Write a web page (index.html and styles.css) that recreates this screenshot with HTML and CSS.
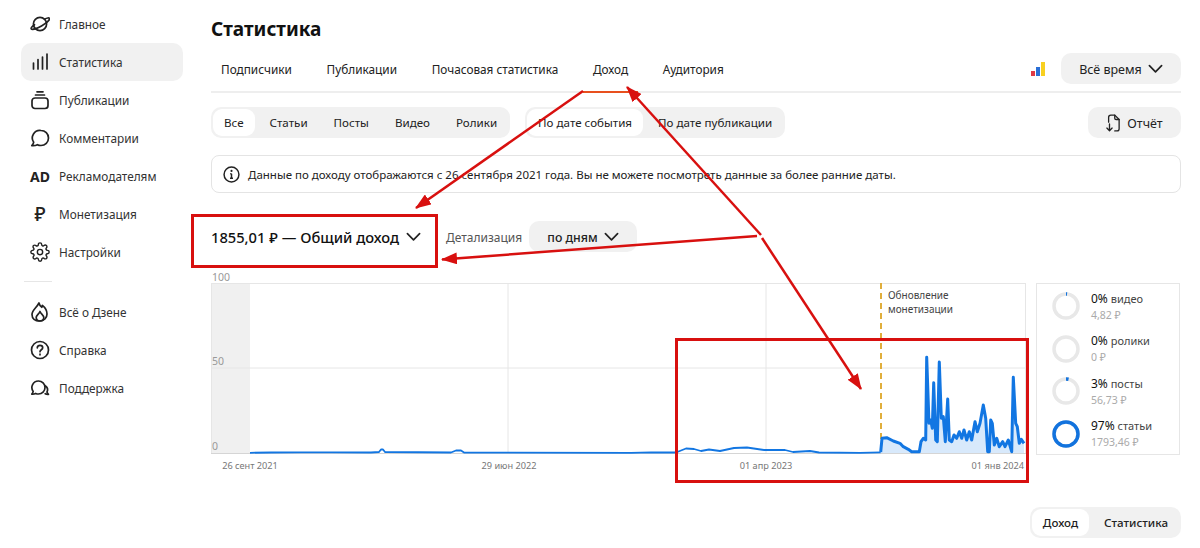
FILE: index.html
```html
<!DOCTYPE html>
<html lang="en">
<head>
  <meta charset="UTF-8">
  <title>Статистика</title>
  <link rel="stylesheet" href="styles.css">
</head>
<body>
  <nav class="sidebar">
    <a class="nav-item">
      <svg class="nav-icon" viewBox="0 0 20 20"><circle cx="10" cy="10" r="6.6"/><path d="M14.5 5.2c2.6-1.4 4.6-1.6 5-.8.6 1.300-3 4.700-8 7.500s-9.600 4-10.300 2.800c-.4-.8 1-2.300 3.300-4"/></svg>
      <span>Главное</span>
    </a>
    <a class="nav-item active">
      <svg class="nav-icon" viewBox="0 0 20 20"><path d="M3.500 17v-6M8 17V7.500M12.500 17V5M17 17V2"/></svg>
      <span>Статистика</span>
    </a>
    <a class="nav-item">
      <svg class="nav-icon" viewBox="0 0 20 20"><rect x="2" y="8" width="16" height="10.500" rx="3"/><path d="M5.500 5h9M7 1.800h6"/></svg>
      <span>Публикации</span>
    </a>
    <a class="nav-item">
      <svg class="nav-icon" viewBox="0 0 20 20"><path d="M11 2.500a7.500 7.500 0 0 1 0 15c-1.300 0-2.500-.2-3.600-.8-1.700.9-3.700 1.100-5.600.9 1-1 1.700-2.100 1.900-3.400A7.500 7.500 0 0 1 11 2.500z"/></svg>
      <span>Комментарии</span>
    </a>
    <a class="nav-item">
      <span class="nav-glyph ad">AD</span>
      <span>Рекламодателям</span>
    </a>
    <a class="nav-item">
      <span class="nav-glyph">₽</span>
      <span>Монетизация</span>
    </a>
    <a class="nav-item">
      <svg class="nav-icon" viewBox="0 0 24 24"><circle cx="12" cy="12" r="3.200"/><path d="M19.400 15a1.650 1.650 0 0 0 .33 1.820l.06.06a2 2 0 0 1 0 2.830 2 2 0 0 1-2.830 0l-.06-.06a1.650 1.650 0 0 0-1.820-.33 1.650 1.650 0 0 0-1 1.510V21a2 2 0 0 1-2 2 2 2 0 0 1-2-2v-.09A1.650 1.650 0 0 0 9 19.400a1.650 1.650 0 0 0-1.820.33l-.06.06a2 2 0 0 1-2.830 0 2 2 0 0 1 0-2.830l.06-.06a1.650 1.650 0 0 0 .33-1.820 1.650 1.650 0 0 0-1.510-1H3a2 2 0 0 1-2-2 2 2 0 0 1 2-2h.09A1.650 1.650 0 0 0 4.600 9a1.650 1.650 0 0 0-.33-1.820l-.06-.06a2 2 0 0 1 0-2.830 2 2 0 0 1 2.830 0l.06.06a1.650 1.650 0 0 0 1.820.33H9a1.650 1.650 0 0 0 1-1.510V3a2 2 0 0 1 2-2 2 2 0 0 1 2 2v.09a1.650 1.650 0 0 0 1 1.510 1.650 1.650 0 0 0 1.820-.33l.06-.06a2 2 0 0 1 2.830 0 2 2 0 0 1 0 2.830l-.06.06a1.650 1.650 0 0 0-.33 1.820V9a1.650 1.650 0 0 0 1.510 1H21a2 2 0 0 1 2 2 2 2 0 0 1-2 2h-.09a1.650 1.650 0 0 0-1.510 1z"/></svg>
      <span>Настройки</span>
    </a>
    <div class="nav-divider"></div>
    <a class="nav-item">
      <svg class="nav-icon" viewBox="0 0 20 20"><path d="M9 1c.6 2.400 1.500 3.600 2.800 4.300.4-.7.600-1.300.6-2 2.600 2 4.600 5 4.600 8.700 0 4-3 7-7.500 7S2 16.500 2 12.500C2 8 6.500 6 9 1z"/><path d="M10 19c-2.300 0-3.800-1.500-3.800-3.400 0-2.300 2.700-3.400 3.800-6.100 1.100 2.700 3.800 3.800 3.800 6.100 0 1.900-1.500 3.400-3.800 3.400z"/></svg>
      <span>Всё о Дзене</span>
    </a>
    <a class="nav-item">
      <svg class="nav-icon" viewBox="0 0 20 20"><circle cx="10" cy="10" r="8.500"/><path d="M7.300 7.800c0-1.500 1.200-2.500 2.700-2.500s2.700 1 2.700 2.400c0 2-2.700 2-2.700 4M10 14.200v.6"/></svg>
      <span>Справка</span>
    </a>
    <a class="nav-item">
      <svg class="nav-icon" viewBox="0 0 20 20"><path d="M8.500 3a6.500 6.500 0 0 1 0 13c-1 0-2-.2-2.800-.6-1.200.6-2.600.8-3.900.7.700-.8 1.200-1.700 1.400-2.700A6.500 6.500 0 0 1 8.500 3z"/><path d="M15.500 8c2 1.500 2.500 4 1.500 6 .2.900.7 1.600 1.500 2.300-1.300.1-2.400-.1-3.300-.6"/></svg>
      <span>Поддержка</span>
    </a>
  </nav>

  <main class="content">
    <h1 class="page-title">Статистика</h1>

    <div class="tabs-row">
      <div class="tabs">
        <a class="tab">Подписчики</a>
        <a class="tab">Публикации</a>
        <a class="tab">Почасовая статистика</a>
        <a class="tab tab-active">Доход</a>
        <a class="tab">Аудитория</a>
      </div>
      <div class="tabs-right">
        <div class="mini-bars"><i class="bar-red"></i><i class="bar-blue"></i><i class="bar-yellow"></i></div>
        <button class="pill-button range-button">Всё время
          <svg class="chevron" viewBox="0 0 16 10"><path d="M1.500 1.500 8 8l6.500-6.500"/></svg>
        </button>
      </div>
    </div>

    <div class="filters-row">
      <div class="segment">
        <span class="segment-item on">Все</span>
        <span class="segment-item">Статьи</span>
        <span class="segment-item">Посты</span>
        <span class="segment-item">Видео</span>
        <span class="segment-item">Ролики</span>
      </div>
      <div class="segment">
        <span class="segment-item on">По дате события</span>
        <span class="segment-item">По дате публикации</span>
      </div>
      <button class="pill-button report-button">
        <svg class="report-icon" viewBox="0 0 16 20"><path d="M3 9V3.500C3 2 4 1 5.500 1H10l5 5v10.500c0 1.500-1 2.500-2.500 2.500H10"/><path d="M10 1v3.500C10 5.500 10.500 6 11.500 6H15"/><path d="M4 11v7.500M1 15.800l3 3 3-3"/></svg>
        Отчёт
      </button>
    </div>

    <div class="notice">
      <svg class="notice-icon" viewBox="0 0 16 16"><circle cx="8" cy="8" r="7"/><path d="M8 7.200v4.300M6.600 11.500h2.800M6.800 7.200H8"/><circle class="dot" cx="8" cy="4.600" r="1"/></svg>
      Данные по доходу отображаются с 26 сентября 2021 года. Вы не можете посмотреть данные за более ранние даты.
    </div>

    <div class="total-row">
      <div class="total">1855,01 ₽ — Общий доход
        <svg class="chevron" viewBox="0 0 16 10"><path d="M1.500 1.500 8 8l6.500-6.500"/></svg>
      </div>
      <span class="detail-label">Детализация</span>
      <button class="pill-button detail-button">по дням
        <svg class="chevron" viewBox="0 0 16 10"><path d="M1.500 1.500 8 8l6.500-6.500"/></svg>
      </button>
    </div>

    <div class="chart-row">
      <div class="chart">
        <svg class="chart-svg" width="815" height="172" viewBox="0 0 815 172">
          <rect class="band" x="0" y="0" width="39" height="170"/>
          <path class="grid" d="M297 0v170M555 0v170M0 85h815M.5 0v170M.5 .5h814M814.500 0v170"/>
          <path class="base" d="M0 170.500h815"/>
          <path class="dash" d="M670 0v170"/>
          <polygon class="area" points="649,170 669.700,168.700 671,155.300 675.700,154.700 682.300,158 689,160.300 692.300,163.700 697.300,166.300 700.700,168.700 708.300,168.700 710,158.700 712.300,155.300 714.700,157 715.700,74.300 718,140.300 719.700,137 721.300,145.300 722.700,99.700 724.700,157 726.300,158.700 728.300,79 730.300,135.300 732.300,133.700 734.300,158.700 736.700,116 738.300,157 740.700,158.700 743,152 745.700,155.300 748.300,148.700 750.700,155.300 753,147 755.700,157 758.300,148.700 760.700,157 764,138.700 766.300,148.700 769,140.300 772.300,122 774.700,135.300 776.700,168.700 778.300,168.700 779.700,137 781.300,140.300 783.300,162 785.700,155.300 788.300,163.700 791.700,158.700 794,163.700 797.300,157 800.700,168.700 802.300,94.300 804.700,140.300 806.300,143.700 808.300,160.300 810.300,156.300 813,160.300 813,170"/>
          <polyline class="line line-flat" points="39,169.800 60,169.500 90,169.300 120,169.300 160,169.500 168,169 170,166.500 172,166.500 174,169 240,169.500 245,167.500 250,167.500 253,169.500 420,169.800 440,169.300 465,169.500 475,165.500 483,166 490,168 498,166.500 509,168 523,165 536,164.500 553,167 574,167 582,169 599,168 608,169.500 649,169.800 669.700,169.300"/>
          <polyline class="line" points="669.700,169 671,155.300 675.700,154.700 682.300,158 689,160.300 692.300,163.700 697.300,166.300 700.700,168.700 708.300,168.700 710,158.700 712.300,155.300 714.700,157 715.700,74.300 718,140.300 719.700,137 721.300,145.300 722.700,99.700 724.700,157 726.300,158.700 728.300,79 730.300,135.300 732.300,133.700 734.300,158.700 736.700,116 738.300,157 740.700,158.700 743,152 745.700,155.300 748.300,148.700 750.700,155.300 753,147 755.700,157 758.300,148.700 760.700,157 764,138.700 766.300,148.700 769,140.300 772.300,122 774.700,135.300 776.700,168.700 778.300,168.700 779.700,137 781.300,140.300 783.300,162 785.700,155.300 788.300,163.700 791.700,158.700 794,163.700 797.300,157 800.700,168.700 802.300,94.300 804.700,140.300 806.300,143.700 808.300,160.300 810.300,156.300 813,160.300"/>
          <text class="tick" x="1" y="-2">100</text>
          <text class="tick" x="1" y="82">50</text>
          <text class="tick" x="1" y="167">0</text>
          <text class="date" x="39" y="186" text-anchor="middle">26 сент 2021</text>
          <text class="date" x="298" y="186" text-anchor="middle">29 июн 2022</text>
          <text class="date" x="555" y="186" text-anchor="middle">01 апр 2023</text>
          <text class="date" x="813" y="186" text-anchor="end">01 янв 2024</text>
          <text class="note" x="677" y="16">Обновление</text>
          <text class="note" x="677" y="30">монетизации</text>
        </svg>
      </div>

      <div class="legend">
        <div class="legend-item">
          <svg class="ring" viewBox="0 0 28 28"><circle class="ring-bg" cx="14" cy="14" r="12"/><circle class="ring-val" cx="14" cy="14" r="12" pathLength="100" stroke-dasharray="1.500 98.500"/></svg>
          <div><div class="legend-name"><b>0%</b> видео</div><div class="legend-sum">4,82 ₽</div></div>
        </div>
        <div class="legend-item">
          <svg class="ring" viewBox="0 0 28 28"><circle class="ring-bg" cx="14" cy="14" r="12"/></svg>
          <div><div class="legend-name"><b>0%</b> ролики</div><div class="legend-sum">0 ₽</div></div>
        </div>
        <div class="legend-item">
          <svg class="ring" viewBox="0 0 28 28"><circle class="ring-bg" cx="14" cy="14" r="12"/><circle class="ring-val" cx="14" cy="14" r="12" pathLength="100" stroke-dasharray="3.500 96.500"/></svg>
          <div><div class="legend-name"><b>3%</b> посты</div><div class="legend-sum">56,73 ₽</div></div>
        </div>
        <div class="legend-item">
          <svg class="ring" viewBox="0 0 28 28"><circle class="ring-bg" cx="14" cy="14" r="12"/><circle class="ring-val" cx="14" cy="14" r="12" pathLength="100" stroke-dasharray="100 0"/></svg>
          <div><div class="legend-name"><b>97%</b> статьи</div><div class="legend-sum">1793,46 ₽</div></div>
        </div>
      </div>
    </div>

    <div class="segment bottom-toggle">
      <span class="segment-item on">Доход</span>
      <span class="segment-item">Статистика</span>
    </div>
  </main>

  <!-- red marks drawn over the screenshot -->
  <svg class="marks" width="1200" height="548" viewBox="0 0 1200 548">
    <defs>
      <marker id="head" markerUnits="userSpaceOnUse" markerWidth="16" markerHeight="12" refX="15" refY="6" orient="auto">
        <path d="M0 0 16 6 0 12z" fill="#d8100f" stroke="none"/>
      </marker>
    </defs>
    <rect x="192.500" y="215.500" width="244" height="51"/>
    <rect x="676.500" y="339.500" width="351" height="142"/>
    <path d="M583 91 416 208" marker-end="url(#head)"/>
    <path d="M761 235 627 87" marker-end="url(#head)"/>
    <path d="M757 236 442 259.500" marker-end="url(#head)"/>
    <path d="M762 238 861 389" marker-end="url(#head)"/>
  </svg>
</body>
</html>
```

FILE: styles.css
```css
* {
  box-sizing: border-box;
}
body {
  margin: 0;
  height: 548px;
  overflow: hidden;
  display: flex;
  background-color: #fff;
  color: #222;
  font-family: "Noto Sans", Arial, sans-serif;
  font-size: 11.800px;
}
button {
  font-family: inherit;
  color: inherit;
  border: none;
}

/* sidebar */
.sidebar {
  width: 211px;
  flex-shrink: 0;
  padding: 5px 28px 0 21px;
}
.nav-item {
  display: flex;
  align-items: center;
  gap: 9px;
  height: 38px;
  padding-left: 9px;
  border-radius: 10px;
  color: #333;
}
.nav-item.active {
  background-color: #f1f1f1;
}
.nav-icon {
  width: 20px;
  height: 20px;
  flex-shrink: 0;
  fill: none;
  stroke: #222;
  stroke-width: 1.7;
  stroke-linecap: round;
  stroke-linejoin: round;
}
.nav-glyph {
  width: 20px;
  flex-shrink: 0;
  text-align: center;
  font-size: 19px;
  font-weight: 500;
  color: #222;
}
.nav-glyph.ad {
  font-size: 14px;
  font-weight: 700;
}
.nav-divider {
  width: 28px;
  height: 1px;
  margin: 10px 0 11px 3px;
  background-color: #e6e6e6;
}

/* main column */
.content {
  width: 970px;
  display: flex;
  flex-direction: column;
  padding-top: 15px;
}
.page-title {
  margin: 0;
  height: 28px;
  font-size: 19px;
  line-height: 28px;
  font-weight: 700;
  color: #111;
}
.tabs-row {
  display: flex;
  justify-content: space-between;
  align-items: center;
  height: 40px;
  margin-top: 10px;
  border-bottom: 2px solid #eee;
}
.tabs {
  display: flex;
  gap: 14.700px;
  height: 100%;
}
.tab {
  display: flex;
  align-items: center;
  padding: 0 10px 6px;
  margin-bottom: -2px;
  height: 40px;
  border-bottom: 2px solid transparent;
}
.tab-active {
  border-bottom-color: #e8501e;
}
.tabs-right {
  display: flex;
  align-items: center;
  gap: 16px;
  margin-bottom: 7px;
}
.mini-bars {
  display: flex;
  align-items: flex-end;
  gap: 1px;
  height: 14px;
}
.mini-bars i {
  display: block;
  width: 4px;
}
.bar-red {
  height: 5px;
  background-color: #e03a45;
}
.bar-blue {
  height: 9px;
  background-color: #2a6fd6;
}
.bar-yellow {
  height: 14px;
  background-color: #f8d020;
}
.pill-button {
  display: flex;
  align-items: center;
  justify-content: center;
  height: 31px;
  padding: 1px 0 0;
  border-radius: 10px;
  background-color: #f1f1f1;
  font-size: 12.500px;
}
.range-button {
  width: 120px;
  gap: 6px;
}
.chevron {
  width: 15px;
  height: 10px;
  fill: none;
  stroke: #222;
  stroke-width: 1.800;
  stroke-linecap: round;
  stroke-linejoin: round;
}

/* filters */
.filters-row {
  display: flex;
  gap: 15px;
  margin-top: 14px;
}
.segment {
  display: flex;
  gap: 4px;
  height: 31px;
  padding: 2px;
  border-radius: 10px;
  background-color: #f1f1f1;
  font-size: 11.600px;
}
.segment-item {
  display: flex;
  align-items: center;
  padding: 0 11px;
  border-radius: 9px;
}
.segment-item.on {
  background-color: #fff;
}
.report-button {
  width: 93px;
  gap: 7px;
  margin-left: auto;
}
.report-icon {
  width: 14px;
  height: 18px;
  fill: none;
  stroke: #222;
  stroke-width: 1.500;
  stroke-linecap: round;
  stroke-linejoin: round;
}

.notice {
  display: flex;
  align-items: center;
  gap: 8px;
  height: 38px;
  margin-top: 17px;
  padding-left: 11px;
  border: 1px solid #e4e4e4;
  border-radius: 8px;
  font-size: 11.500px;
}
.notice-icon {
  width: 17px;
  height: 17px;
  fill: none;
  stroke: #222;
  stroke-width: 1.400;
}
.notice-icon .dot {
  fill: #222;
  stroke: none;
}

.total-row {
  display: flex;
  align-items: center;
  height: 31px;
  margin-top: 28px;
}
.total {
  display: flex;
  align-items: center;
  gap: 7px;
  width: 235px;
  padding-top: 1px;
  font-size: 14.700px;
  font-weight: 500;
  color: #111;
}
.detail-label {
  width: 83px;
  padding-top: 1px;
  font-size: 12px;
  color: #555;
}
.detail-button {
  width: 108px;
  gap: 6px;
  font-size: 12.300px;
  font-weight: 500;
}

/* chart */
.chart-row {
  display: flex;
  gap: 10px;
  margin-top: 31px;
}
.chart {
  width: 815px;
  height: 172px;
}
.chart-svg {
  display: block;
  overflow: visible;
}
.band {
  fill: #f0f0f0;
}
.grid {
  fill: none;
  stroke: #e6e6e6;
  stroke-width: 1;
}
.base {
  stroke: #d5d5d5;
  stroke-width: 1;
}
.dash {
  stroke: #e0ae3c;
  stroke-width: 2;
  stroke-dasharray: 6 4;
}
.area {
  fill: #d8e9fb;
}
.line {
  fill: none;
  stroke: #1276e2;
  stroke-width: 3;
  stroke-linejoin: round;
}
.line-flat {
  stroke-width: 1.800;
}
.tick {
  font-size: 10.500px;
  fill: #999;
}
.date {
  font-size: 9.200px;
  fill: #777;
}
.note {
  font-size: 10px;
  fill: #444;
}
.legend {
  width: 144px;
  height: 172px;
  padding-top: 1px;
  border: 1px solid #e6e6e6;
}
.legend-item {
  display: flex;
  align-items: center;
  gap: 11px;
  height: 42.500px;
  padding-left: 15px;
}
.ring {
  width: 28px;
  height: 28px;
  flex-shrink: 0;
  transform: rotate(-90deg);
  fill: none;
}
.ring-bg {
  stroke: #e8e8e8;
  stroke-width: 3.500;
}
.ring-val {
  stroke: #1273de;
  stroke-width: 3.500;
}
.legend-name {
  font-size: 11px;
  line-height: 17px;
  color: #444;
}
.legend-name b {
  font-size: 12px;
  font-weight: 400;
  color: #111;
}
.legend-sum {
  font-size: 10.500px;
  line-height: 16px;
  color: #aaa;
}

.bottom-toggle {
  align-self: flex-end;
  margin-top: 52px;
  font-weight: 500;
}

/* annotations */
.marks {
  position: absolute;
  top: 0;
  left: 0;
  pointer-events: none;
  fill: none;
  stroke: #d8100f;
  stroke-width: 2.500;
}
.marks rect {
  stroke-width: 3;
}
```
